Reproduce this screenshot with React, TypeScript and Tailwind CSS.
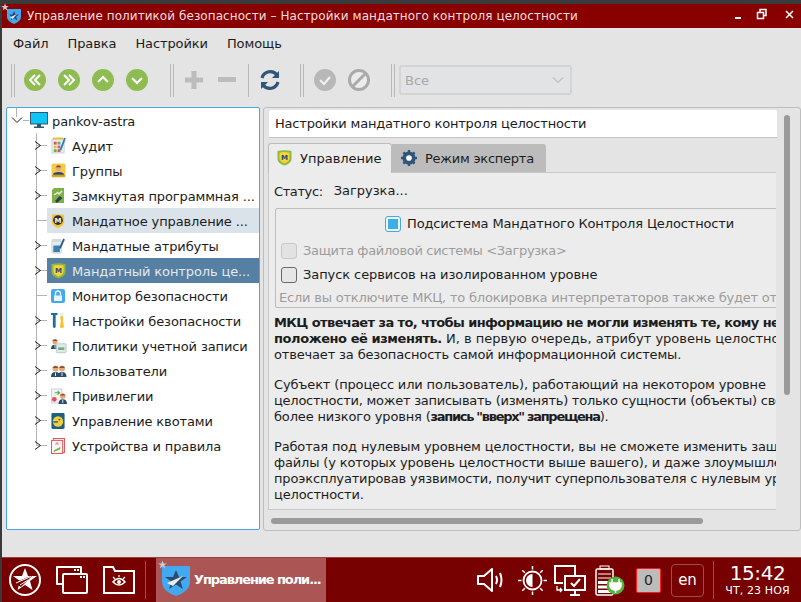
import type { ReactNode } from "react";

function TreeGutter({ last, leaf }: { last?: boolean; leaf?: boolean }) {
  return (
    <svg width="40" height="25" className="shrink-0">
      <path d={last ? "M29.5 0V12.5" : "M29.5 0V25"} stroke="#b4b4b4" fill="none" />
      <path d="M29 12.5H40" stroke="#b4b4b4" fill="none" />
      {!leaf && (
        <path d="M28 8.5L33.5 12.5L28 16.5" stroke="#1c1c1c" strokeWidth="1" fill="none" />
      )}
    </svg>
  );
}

const Audit = () => (
  <svg width="15" height="17" viewBox="0 0 16 18">
    <rect x="1" y="2" width="13" height="15" fill="#e8eef0" stroke="#c7d2d6" />
    <rect x="2" y="0.5" width="11" height="2" fill="#f0b93a" />
    <rect x="3" y="5" width="3" height="3" fill="#e94f4f" />
    <rect x="7" y="5" width="3" height="3" fill="#5ab552" />
    <rect x="3" y="9" width="3" height="3" fill="#f0b93a" />
    <rect x="7" y="9" width="3" height="3" fill="#d85c9c" />
    <rect x="3" y="13" width="3" height="3" fill="#5ab552" />
    <rect x="7" y="13" width="3" height="3" fill="#e94f4f" />
    <path d="M15 1L10 14" stroke="#2d7fb8" strokeWidth="2" />
  </svg>
);

const Groups = () => (
  <svg width="15" height="15" viewBox="0 0 16 16">
    <rect x="0.5" y="0.5" width="15" height="15" rx="2" fill="#f5c94a" />
    <circle cx="8" cy="5.5" r="3" fill="#e9a878" />
    <path d="M5 4.5Q8 0.5 11 4.5Z" fill="#7a4a25" />
    <path d="M2 12.5Q2.5 9.5 8 9.5Q13.5 9.5 14 12.5Z" fill="#2b4a6d" />
    <rect x="1" y="13" width="14" height="1.5" fill="#c98f1e" />
  </svg>
);

const Closed = () => (
  <svg width="14" height="17" viewBox="0 0 14 17">
    <path d="M3 1H13V16H1V3Z" fill="#7eb148" />
    <path d="M4 14L8.5 9L11.5 11L6 16Z" fill="#2a3f55" />
    <path d="M6 5L8 7L11 4M3 8L6 6" stroke="#e8f2dd" strokeWidth="1.5" fill="none" />
  </svg>
);

const MandateDark = () => (
  <svg width="14" height="16" viewBox="0 0 16 17">
    <path d="M1 1H15V10Q15 14 8 16.5Q1 14 1 10Z" fill="#f3c53b" />
    <circle cx="8" cy="7.5" r="5.5" fill="#2f2f2f" />
    <text x="8" y="10.5" textAnchor="middle" fontSize="8" fontWeight="700" fill="#f4f4f4" fontFamily="DejaVu Sans">M</text>
  </svg>
);

const Attrs = () => (
  <svg width="14" height="16" viewBox="0 0 15 17">
    <rect x="1" y="3" width="10" height="13" rx="1" fill="#e6edf1" stroke="#c4d0d6" />
    <rect x="2.5" y="8" width="7" height="7" fill="#3f7fae" />
    <rect x="1" y="1" width="10" height="3" fill="#cfd9de" />
    <path d="M14 1L9.5 11" stroke="#2a5f8c" strokeWidth="2" />
  </svg>
);

const MandateShield = ({ size = 15 }: { size?: number }) => (
  <svg width={size} height={size + 1} viewBox="0 0 15 16">
    <path d="M0.5 1Q7.5 -0.5 14.5 1V9Q14.5 13 7.5 15.5Q0.5 13 0.5 9Z" fill="#8fb83f" />
    <path d="M2.5 2.5Q7.5 1.5 12.5 2.5V8.5Q12.5 11.5 7.5 13.5Q2.5 11.5 2.5 8.5Z" fill="#f5d33e" />
    <text x="7.5" y="9.5" textAnchor="middle" fontSize="7" fontWeight="700" fill="#2b4a6d" fontFamily="DejaVu Sans">M</text>
  </svg>
);

const Lock = () => (
  <svg width="14" height="14" viewBox="0 0 14 14">
    <rect width="14" height="14" rx="2" fill="#43a9ee" />
    <path d="M4.5 6.5V4.5a2.5 2.5 0 0 1 5 0V6.5" stroke="#e9f5fd" strokeWidth="1.3" fill="none" />
    <rect x="3" y="6.5" width="8" height="5.5" fill="#e9f5fd" />
  </svg>
);

const Tools = () => (
  <svg width="14" height="17" viewBox="0 0 15 18">
    <path d="M0 1H7V3H5V16Q3.5 18 2 16V3H0Z" fill="#1f6f9c" />
    <path d="M9.5 1H13V10L14 16Q11.5 18 9.5 16L10.5 10Z" fill="#f2c230" />
    <rect x="9.5" y="0.5" width="3.5" height="4" fill="#e9eef0" />
  </svg>
);

const Person = ({ x, y }: { x: number; y: number }) => (
  <g transform={`translate(${x} ${y})`}>
    <circle cx="4.5" cy="3.5" r="3" fill="#e5a877" />
    <path d="M1.5 3Q4.5 -1 7.5 3Z" fill="#8a4f28" />
    <path d="M0 12Q0 7 4.5 7Q9 7 9 12Z" fill="#2b4a6d" />
    <path d="M4.5 7.5V11" stroke="#e8eef2" />
  </g>
);

const Policies = () => (
  <svg width="16" height="16" viewBox="0 0 18 17">
    <Person x={0} y={0} />
    <rect x="6" y="6" width="11" height="10" rx="1" fill="#dfe9e5" stroke="#b9c8c2" />
    <rect x="8" y="10" width="7" height="3" fill="#76a88e" />
  </svg>
);

const Users = () => (
  <svg width="16" height="14" viewBox="0 0 16 14">
    <Person x={0} y={1} />
    <Person x={6.5} y={1} />
  </svg>
);

const Privileges = () => (
  <svg width="16" height="16" viewBox="0 0 17 17">
    <rect x="0.5" y="1" width="11" height="15" fill="#eef2f3" stroke="#c8d2d6" />
    <path d="M4 5H9M7 3L9 5L7 7" stroke="#55a84a" strokeWidth="1.2" fill="none" />
    <circle cx="3.5" cy="12" r="2.5" fill="#e2505a" />
    <Person x={8} y={5} />
  </svg>
);

const Quota = () => (
  <svg width="14" height="16" viewBox="0 0 14 17">
    <rect width="14" height="17" rx="1.5" fill="#1f5f86" />
    <circle cx="7" cy="9" r="5.5" fill="#f4cf3a" />
    <path d="M2 9.5H7" stroke="#1f5f86" strokeWidth="1.5" />
    <circle cx="8.5" cy="7" r="1" fill="#1f5f86" />
  </svg>
);

const Devices = () => (
  <svg width="14" height="16" viewBox="0 0 15 17">
    <rect x="2.5" y="0.5" width="12" height="15" fill="#f8e9e9" stroke="#dc5257" />
    <rect x="0.5" y="2.5" width="12" height="14" fill="#fdf5f5" stroke="#dc5257" />
    <path d="M6.5 4L9 7H4Z" fill="#e59a90" />
    <path d="M3 13L10 9.5V12L3 15Z" fill="#7eb148" />
  </svg>
);

const rows: { label: string; icon: ReactNode; leaf?: boolean; tone?: "soft" | "active" }[] = [
  { label: "Аудит", icon: <Audit /> },
  { label: "Группы", icon: <Groups /> },
  { label: "Замкнутая программная ...", icon: <Closed /> },
  { label: "Мандатное управление ...", icon: <MandateDark />, leaf: true, tone: "soft" },
  { label: "Мандатные атрибуты", icon: <Attrs /> },
  { label: "Мандатный контроль це...", icon: <MandateShield />, tone: "active" },
  { label: "Монитор безопасности", icon: <Lock />, leaf: true },
  { label: "Настройки безопасности", icon: <Tools /> },
  { label: "Политики учетной записи", icon: <Policies /> },
  { label: "Пользователи", icon: <Users /> },
  { label: "Привилегии", icon: <Privileges /> },
  { label: "Управление квотами", icon: <Quota /> },
  { label: "Устройства и правила", icon: <Devices /> },
];

function NavButton({ d }: { d: string }) {
  return (
    <svg width="22" height="22" viewBox="0 0 22 22">
      <circle cx="11" cy="11" r="11" fill="#8fbc52" />
      <path d={d} stroke="#fff" strokeWidth="2" fill="none" />
    </svg>
  );
}

function Grip() {
  return <div className="w-[4px] h-[33px] border-x border-[#b9b9b9] shrink-0" />;
}

function Toolbar() {
  return (
    <div className="h-[44px] flex items-center pl-[9px] shrink-0">
      <Grip />
      <div className="flex gap-[12px] ml-[9px]">
        <NavButton d="M11 6L6 11L11 16M16 6L11 11L16 16" />
        <NavButton d="M6 6L11 11L6 16M11 6L16 11L11 16" />
        <NavButton d="M6 13L11 8L16 13" />
        <NavButton d="M6 9L11 14L16 9" />
      </div>
      <div className="ml-[22px]">
        <Grip />
      </div>
      <svg width="20" height="20" viewBox="0 0 20 20" className="ml-[10px]">
        <path d="M10 1V19M1 10H19" stroke="#bcbcbc" strokeWidth="5" fill="none" />
      </svg>
      <svg width="18" height="6" viewBox="0 0 18 6" className="ml-[14px]">
        <rect width="18" height="5" fill="#bcbcbc" />
      </svg>
      <div className="ml-[12px] w-px h-[33px] bg-[#b9b9b9]" />
      <svg width="22" height="22" viewBox="0 0 22 22" className="ml-[10px]">
        <path d="M3 9A8.5 8.5 0 0 1 18 6" stroke="#2f5578" strokeWidth="3.2" fill="none" />
        <path d="M20 2V9H13Z" fill="#2f5578" />
        <path d="M19 13A8.5 8.5 0 0 1 4 16" stroke="#2f5578" strokeWidth="3.2" fill="none" />
        <path d="M2 20V13H9Z" fill="#2f5578" />
      </svg>
      <div className="ml-[19px]">
        <Grip />
      </div>
      <svg width="22" height="22" viewBox="0 0 22 22" className="ml-[10px]">
        <circle cx="11" cy="11" r="11" fill="#b8b8b8" />
        <path d="M6 11L10 15L16 8" stroke="#f2f2f2" strokeWidth="2" fill="none" />
      </svg>
      <svg width="22" height="22" viewBox="0 0 22 22" className="ml-[12px]">
        <circle cx="11" cy="11" r="9.5" fill="#ececec" stroke="#aaaaaa" strokeWidth="3" />
        <path d="M5 17L17 5" stroke="#aaaaaa" strokeWidth="3" />
      </svg>
      <div className="ml-[21px]">
        <Grip />
      </div>
      <div className="ml-[4px] w-[173px] h-[30px] rounded-[3px] border-2 border-[#d4d4d4] bg-[#e2e3e4] flex items-center justify-between pl-[4px] pr-[6px] text-[13px] text-[#a8a8a8]">
        <span className="mt-[2px]">Все</span>
        <svg width="12" height="8" viewBox="0 0 12 8">
          <path d="M1 1.5L6 6.5L11 1.5" stroke="#a8a8a8" fill="none" />
        </svg>
      </div>
    </div>
  );
}

function Tree() {
  return (
    <div className="w-[254px] h-[423px] shrink-0 bg-white border border-[#4aa6e0] rounded-[2px] overflow-hidden text-[13px] text-[#1c1c1c] tracking-[-0.12px]">
      <div className="h-[25px] flex items-center">
        <svg width="23" height="25" className="shrink-0">
          <path d="M9.5 0V9" stroke="#b4b4b4" fill="none" />
          <path d="M16 12.5H22" stroke="#b4b4b4" fill="none" />
          <path d="M5 9.5L10 14.5L15 9.5" stroke="#1c1c1c" fill="none" />
        </svg>
        <svg width="19" height="17" viewBox="0 0 19 17" className="shrink-0">
          <rect x="0.5" y="0.5" width="17" height="11.5" fill="#0fc5f7" stroke="#30566f" />
          <rect x="7" y="12" width="4" height="3" fill="#30566f" />
          <rect x="4" y="14.5" width="10" height="1.5" fill="#30566f" />
        </svg>
        <span className="ml-[3px] mt-[2px]">pankov-astra</span>
      </div>
      <div>
        {rows.map((row, i) => (
          <div key={row.label} className="h-[25px] flex">
            <TreeGutter last={i === rows.length - 1} leaf={row.leaf} />
            <div
              className={`flex-1 flex items-center min-w-0 ${
                row.tone === "soft"
                  ? "bg-[#dbe3ea]"
                  : row.tone === "active"
                    ? "bg-[#557fa3] text-[#e5e9ec]"
                    : ""
              }`}
            >
              <span className="w-[24px] pl-[4px] flex justify-start shrink-0">{row.icon}</span>
              <span className="ml-px mt-[2px] whitespace-nowrap">{row.label}</span>
            </div>
          </div>
        ))}
      </div>
    </div>
  );
}

function ControlTab() {
  return (
    <div className="flex items-start h-[29px] pl-[4px] mt-[5px]">
      <div className="w-[124px] h-[30px] bg-[#ececec] border border-b-0 border-[#bdbdbd] rounded-t-[3px] flex items-center pl-[8px] gap-[8px] relative z-10">
        <span className="-mt-[2px]">
          <MandateShield size={15} />
        </span>
        <span className="mt-[1px]">Управление</span>
      </div>
      <div className="w-[154px] h-[28px] mt-px bg-[#bcbcbc] rounded-tr-[3px] flex items-center pl-[9px] gap-[8px] tracking-[-0.25px]">
        <svg width="16" height="16" viewBox="0 0 17 17">
          <circle cx="8.5" cy="8.5" r="5" fill="#fff" stroke="#2f5578" strokeWidth="4" />
          <path
            d="M8.5 0V3M8.5 14V17M0 8.5H3M14 8.5H17M2.5 2.5L4.5 4.5M12.5 12.5L14.5 14.5M14.5 2.5L12.5 4.5M4.5 12.5L2.5 14.5"
            stroke="#2f5578"
            strokeWidth="2.5"
          />
        </svg>
        <span className="mt-[1px]">Режим эксперта</span>
      </div>
    </div>
  );
}

function Line({ children }: { children: ReactNode }) {
  return <div className="h-[16px] leading-[16px] whitespace-nowrap tracking-[-0.16px]">{children}</div>;
}

function Settings() {
  return (
    <div className="flex-1 min-w-0 h-[424px] border border-[#bdbdbd] rounded-[3px] relative bg-[#e4e4e4] text-[13px] text-[#1c1c1c] overflow-hidden">
      <div className="w-[508px] ml-[5px] mt-[2px] h-[28px] bg-white rounded-t-[2px] border-b border-[#c4c4c4] flex items-center pl-[6px] tracking-[-0.2px]">
        Настройки мандатного контроля целостности
      </div>
      <ControlTab />
      <div className="w-[508px] ml-[4px] h-[338px] bg-[#ececec] border-l border-t border-b border-[#c8c8c8] overflow-hidden">
        <div className="flex pl-[5px] h-[35px] items-center pt-[3px]">
          <span className="tracking-[-0.4px]">Статус:</span>
          <span className="ml-[11px] -mt-[2px]">Загрузка...</span>
        </div>
        <div className="ml-[6px] h-[100px] w-[520px] border border-[#bdbdbd] rounded-[2px]">
          <div className="h-[30px] flex items-center pl-[109px] tracking-[-0.14px]">
            <span className="w-[16px] h-[16px] rounded-[3px] border border-[#4aa6e0] bg-[#eef6fb] flex items-center justify-center">
              <span className="w-[10px] h-[10px] bg-[#3daee9]" />
            </span>
            <span className="ml-[6px]">Подсистема Мандатного Контроля Целостности</span>
          </div>
          <div className="h-[24px] flex items-center pl-[5px] text-[#9c9c9c] tracking-[-0.33px]">
            <span className="w-[16px] h-[16px] rounded-[3px] border border-[#c8c8c8] bg-[#e2e2e2]" />
            <span className="ml-[6px]">Защита файловой системы &lt;Загрузка&gt;</span>
          </div>
          <div className="h-[24px] flex items-center pl-[5px] tracking-[-0.08px]">
            <span className="w-[16px] h-[16px] rounded-[3px] border border-[#6a6a6a] bg-[#e6e6e6]" />
            <span className="ml-[6px]">Запуск сервисов на изолированном уровне</span>
          </div>
          <div className="h-[20px] leading-[21px] pl-[3px] text-[#9c9c9c] whitespace-nowrap tracking-[-0.2px]">
            Если вы отключите МКЦ, то блокировка интерпретаторов также будет отключена
          </div>
        </div>
        <div className="pl-[5px] mt-[7px] w-[760px]">
          <Line>
            <b className="tracking-[-0.6px]">МКЦ отвечает за то, чтобы информацию не могли изменять те, кому не</b>
          </Line>
          <Line>
            <b className="tracking-[-0.43px]">положено её изменять.</b>
            <span className="tracking-[0px]"> И, в первую очередь, атрибут уровень целостности</span>
          </Line>
          <Line>отвечает за безопасность самой информационной системы.</Line>
          <div className="h-[14px]" />
          <Line>Субъект (процесс или пользователь), работающий на некотором уровне</Line>
          <Line>
            <span className="tracking-[-0.25px]">целостности, может записывать (изменять) только сущности (объекты) своего</span>
          </Line>
          <Line>
            более низкого уровня (<b className="tracking-[-1.3px]">запись "вверх" запрещена</b>).
          </Line>
          <div className="h-[14px]" />
          <Line>Работая под нулевым уровнем целостности, вы не сможете изменить защищённые</Line>
          <Line>файлы (у которых уровень целостности выше вашего), и даже злоумышленник,</Line>
          <Line>проэксплуатировав уязвимости, получит суперпользователя с нулевым уровнем</Line>
          <Line>целостности.</Line>
        </div>
      </div>
      {/* scroll thumbs sit over the panel edges */}
      <div className="absolute left-[520px] top-[7px] w-[6px] h-[280px] rounded-full bg-[#9a9a9a]" />
      <div className="absolute left-[7px] top-[410px] w-[432px] h-[6px] rounded-full bg-[#9a9a9a]" />
    </div>
  );
}

function Star({ size = 24, color = "#fff" }: { size?: number; color?: string }) {
  return (
    <svg width={size} height={size} viewBox="0 0 24 24">
      <path d="M12 1L15 9H23.5L16.7 14L19.2 22.5L12 17.5L4.8 22.5L7.3 14L0.5 9H9Z" fill={color} />
    </svg>
  );
}

function Taskbar() {
  return (
    <div className="h-[45px] ml-[2px] bg-[#770000] border-t border-[#a33b3b] flex items-center text-white shrink-0">
      <svg width="32" height="32" viewBox="0 0 32 32" className="ml-[7px]">
        <circle cx="16" cy="16" r="15" fill="none" stroke="#fff" strokeWidth="2" />
        <path d="M16 4L19 12H28L21 17L23.5 26L16 21L8.5 26L11 17L4 12H13Z" fill="#fff" />
        <path d="M5 19L24 11L12 23Z" fill="#770000" />
        <path d="M7 19L22 12.5M11 21L19 16" stroke="#fff" />
      </svg>
      <svg width="32" height="30" viewBox="0 0 32 30" fill="none" stroke="#fff" strokeWidth="2" className="ml-[15px]">
        <path d="M7 19H1V2H25V9" strokeLinejoin="round" />
        <rect x="7" y="9" width="24" height="19" rx="1" fill="#770000" />
        <path d="M18 5H23M24 12H29" strokeDasharray="2 1" />
      </svg>
      <svg width="32" height="28" viewBox="0 0 32 28" fill="none" stroke="#fff" strokeWidth="2" className="ml-[15px]">
        <path d="M1 27V1H10L12 5H31V27Z" />
        <path d="M10 16Q16 9 22 16Q16 22 10 16Z" strokeWidth="1.5" />
        <circle cx="16" cy="16" r="2" fill="#fff" stroke="none" />
        <path d="M10 11L12 13M16 9V11M22 11L20 13" strokeWidth="1.2" />
      </svg>
      <div className="ml-[10px] w-px h-[38px] bg-[#a04a4a]" />
      <div className="ml-[10px] w-[170px] h-[44px] bg-[#ab5555] flex items-center relative shrink-0">
        <span className="absolute left-[2px] top-[2px]">
          <Star size={9} color="#c9c9c9" />
        </span>
        <svg width="28" height="30" viewBox="0 0 28 30" className="ml-[6px] mt-[2px] shrink-0">
          <path d="M0 0H28V16Q28 25 14 30Q0 25 0 16Z" fill="#43a9ee" />
          <path d="M14 4L17 11H25L18.5 15.5L21 23L14 18.5L7 23L9.5 15.5L3 11H11Z" fill="#2b4a6d" />
          <path d="M5 17L21 10L11 20Z" fill="#e8eef2" />
        </svg>
        <span className="ml-[4px] text-[13px] font-bold whitespace-nowrap tracking-[-1.1px]">Управление поли...</span>
      </div>
      <svg width="27" height="26" viewBox="0 0 27 26" fill="none" stroke="#fff" strokeWidth="2" className="ml-[151px]">
        <path d="M1 9H7L15 2V24L7 17H1Z" strokeLinejoin="round" />
        <path d="M19 9Q21 13 19 17M23 6Q26 13 23 20" strokeWidth="2" />
      </svg>
      <svg width="29" height="29" viewBox="0 0 29 29" className="ml-[14px]">
        <circle cx="14.5" cy="14.5" r="9" fill="none" stroke="#fff" strokeWidth="1.8" />
        <path d="M14.5 8A6.5 6.5 0 0 0 14.5 21Z" fill="#fff" />
        <path
          d="M14.5 0V3.5M14.5 25.5V29M0 14.5H3.5M25.5 14.5H29M4.3 4.3L6.8 6.8M22.2 22.2L24.7 24.7M24.7 4.3L22.2 6.8M4.3 24.7L6.8 22.2"
          stroke="#fff"
          strokeWidth="1.5"
        />
      </svg>
      <svg width="32" height="31" viewBox="0 0 32 31" fill="none" stroke="#fff" strokeWidth="2" className="ml-[7px]">
        <path d="M9 18H1V1H21V10" />
        <rect x="11" y="11" width="20" height="14" fill="#770000" />
        <path d="M17 18L20 21L26 14M21 25V29M16 30H26" />
        <path d="M3 21V25H8M6 23L8 25L6 27" strokeWidth="1.3" />
      </svg>
      <svg width="30" height="31" viewBox="0 0 30 31" className="ml-[9px]">
        <rect x="1" y="4" width="17" height="26" rx="1.5" fill="none" stroke="#fff" strokeWidth="1.5" />
        <rect x="5" y="1" width="9" height="3" fill="none" stroke="#fff" />
        <path d="M3 9H16M3 13H16" stroke="#fff" strokeWidth="1.2" />
        <rect x="3" y="16" width="13" height="3" fill="#fff" />
        <rect x="3" y="20.5" width="13" height="3" fill="#fff" />
        <rect x="3" y="25" width="13" height="3" fill="#fff" />
        <circle cx="20.5" cy="20.5" r="9" fill="#55b33c" />
        <path d="M17 14V18M24 14V18M15 18H26V21Q25 25 20.5 25Q16 25 15 21ZM20.5 25V28" stroke="#fff" fill="#fff" strokeWidth="1.5" />
      </svg>
      <div className="ml-[11px] w-[25px] h-[25px] rounded-[2px] border border-[#ff1a1a] bg-[#bcbcbc] text-[#222] text-[14px] flex items-center justify-center">
        0
      </div>
      <div className="ml-[10px] w-[33px] h-[33px] rounded-[4px] border border-[#a04a4a] text-[15px] flex items-center justify-center">
        en
      </div>
      <div className="ml-[9px] w-px h-[38px] bg-[#a04a4a]" />
      <div className="flex-1 min-w-0 flex flex-col items-center leading-none">
        <span className="text-[20px] leading-[21px] tracking-[-0.4px]">15:42</span>
        <span className="text-[11px] leading-[13px] whitespace-nowrap tracking-[0.1px]">ЧТ, 23 НОЯ</span>
      </div>
    </div>
  );
}

export default function App() {
  return (
    <div className="w-[801px] h-[602px] bg-[#3a3a3a] flex flex-col overflow-hidden font-['DejaVu_Sans',sans-serif]">
      <div className="h-[4px] shrink-0" />
      <div className="ml-[2px] flex-1 bg-[#e4e4e4] flex flex-col min-h-0">
        <div className="h-[24px] bg-[#880000] flex items-center text-[12px] tracking-[0.06px] text-[#f4dede] relative shrink-0">
          <span className="absolute -left-[1px] -top-[1px]">
            <Star size={8} color="#c9c9c9" />
          </span>
          <svg width="14" height="15" viewBox="0 0 14 15" className="ml-[5px]">
            <path d="M0 0H14V8Q14 12 7 15Q0 12 0 8Z" fill="#43a9ee" />
            <path d="M7 2L8.5 5.5H12L9.2 7.8L10.3 11.5L7 9.3L3.7 11.5L4.8 7.8L2 5.5H5.5Z" fill="#2b4a6d" />
            <path d="M3 8.5L10 5L5.5 10Z" fill="#e8eef2" />
          </svg>
          <span className="ml-[6px] whitespace-nowrap">
            Управление политикой безопасности – Настройки мандатного контроля целостности
          </span>
          <div className="ml-auto flex items-center pr-[4px]">
            <svg width="70" height="16" viewBox="0 0 70 16" fill="none" stroke="#fff" strokeWidth="1.5">
              <path d="M8 10H14" strokeWidth="2" />
              <rect x="30.5" y="4.5" width="6" height="6" />
              <path d="M33 4V1.5H39V7.5H36.5" />
              <path d="M59 3L66 10M66 3L59 10" />
            </svg>
          </div>
        </div>
        <div className="h-[30px] flex items-center pl-[11px] gap-[19px] text-[13px] text-[#1c1c1c] tracking-[-0.1px] shrink-0">
          <span className="mt-[2px]">Файл</span>
          <span className="mt-[2px]">Правка</span>
          <span className="mt-[2px]">Настройки</span>
          <span className="mt-[2px]">Помощь</span>
        </div>
        <Toolbar />
        <div className="flex pl-[4px] gap-[3px] mt-[5px]">
          <Tree />
          <Settings />
        </div>
      </div>
      <Taskbar />
    </div>
  );
}
